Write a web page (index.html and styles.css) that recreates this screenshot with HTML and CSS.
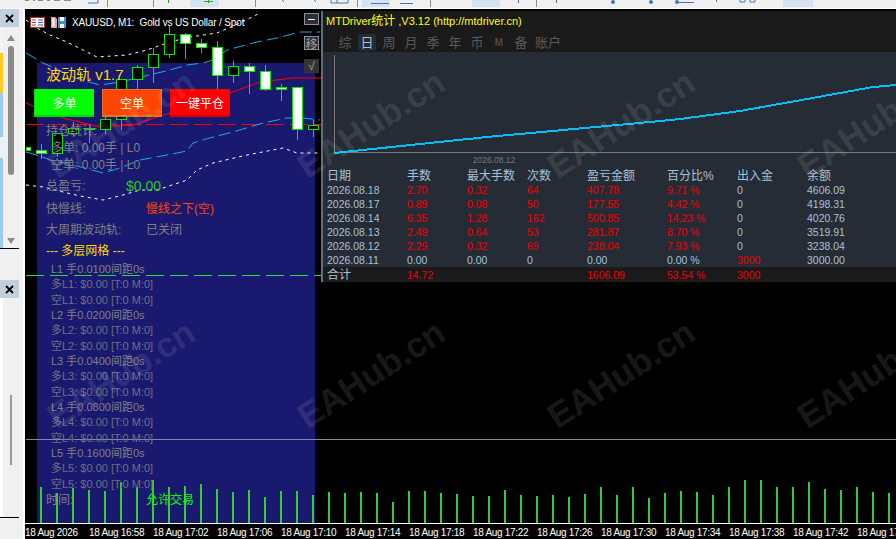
FILE: index.html
```html
<!DOCTYPE html>
<html lang="zh-CN">
<head>
    <meta charset="UTF-8">
    <title>XAUUSD, M1</title>
    <link rel="stylesheet" href="styles.css">
</head>
<body>
    <!-- toolbar, only its bottom edge is in view -->
    <header class="toolbar">
        <svg width="896" height="8" viewBox="0 0 896 8">
            <path d="M190 0h29v7h-29zM362 0h28v7h-28zM472 0h28v7h-28zM783 0h30v7h-30z" fill="#d5e3f1"/>
            <path d="M153.500 0v7M255.500 0v7M357.500 0v7M536.500 0v7M107.500 0v7M430.500 0v7" stroke="#8f8f8f"/>
            <path d="M168.500 0v3M208.500 0v3M204 1.500h9" stroke="#2aa82a"/>
            <path d="M88 3h10V0M282 0l2 2M314 0l2 2M331 0v3h17V0M337 0v3M371 3.500h18M400 3.500h13M518.500 0v3M556.500 0v3M716.500 0v2M677 2.500h17M740 0v2h5V0M750 0v2h5V0" stroke="#3f78b5" fill="none"/>
            <circle cx="613" cy="2" r="2" fill="#3f78b5"/>
            <circle cx="651" cy="2" r="2" fill="#3f78b5"/>
            <circle cx="677" cy="2" r="2" fill="#3f78b5"/>
            <path d="M25 0h4M33 0h2M38 0h5M47 0h3M54 0h6M64 0h7" stroke="#222"/>
        </svg>
    </header>

    <div class="workspace">
        <aside class="dock">
            <section class="dock-top">
                <div class="dock-close">
                    <svg width="9" height="9" viewBox="0 0 9 9"><path d="M1 1l7 7M8 1l-7 7" stroke="#000" stroke-width="1.800"/></svg>
                </div>
                <div class="dock-body">
                    <div class="strip"></div>
                    <div class="scroller">
                        <span class="arrow-up"></span>
                        <span class="thumb"></span>
                        <span class="arrow-down"></span>
                    </div>
                </div>
            </section>
            <section class="dock-bottom">
                <div class="dock-close">
                    <svg width="9" height="9" viewBox="0 0 9 9"><path d="M1 1l7 7M8 1l-7 7" stroke="#000" stroke-width="1.800"/></svg>
                </div>
                <div class="dock-body-low">
                    <span class="thumb-low"></span>
                </div>
            </section>
        </aside>

        <main class="chart">
            <div class="ea-bg"></div>

            <!-- price lines, candles, volume. coordinates are page pixels -->
            <svg class="plot" width="871" height="530" viewBox="25 9 871 530">
                <path class="l-dash" stroke="#ff0000" d="M26 124.500H321"/>
                <path class="l-dash" stroke="#22dd44" d="M26 275.500H321"/>
                <path class="l-sep" d="M26 439.500H896"/>
                <polyline class="l-band" points="26,53 43,63 50,66 75,78 100,85 120,82 170,70 187,65 203,63 213,60 227,50 257,42 277,38 300,32 320,32"/>
                <polyline class="l-band" points="26,152 43,157 50,160 77,166 103,173 120,168 140,160 167,155 187,151 193,143 213,137 233,132 263,123 287,118 303,118 320,120"/>
                <polyline class="l-dots" points="26,20 37,28 50,35 67,42 97,57 127,55 147,50 170,42 190,37 217,33 240,23 260,13"/>
                <polyline class="l-dots" points="26,185 43,187 63,192 80,196 103,200 123,195 140,190 157,190 187,180 197,170 213,163 247,155 283,148 297,153 320,153"/>
                <polyline class="l-ma" points="26,103 35,107 63,118 100,127 133,125 170,113 230,93 260,82 293,78 321,78"/>

                <g class="wicks">
                    <path d="M41.500 144V159M57.500 133V157M73.500 122V137M89.500 125V143M105.500 117V134M121.500 79V130M137.500 65V89M153.500 48V83M169.500 25V58M185.500 33V59M201.500 39V53M217.500 41V89M233.500 61V83M249.500 63V94M265.500 65V91M281.500 84V101M297.500 87V140M313.500 120V137"/>
                </g>
                <g class="bodies">
                    <rect class="up" x="26.500" y="147.500" width="4" height="3"/>
                    <rect class="up" x="36.500" y="150.500" width="10" height="3"/>
                    <rect x="52.500" y="133.500" width="10" height="20"/>
                    <rect x="68.500" y="128.500" width="10" height="5"/>
                    <rect class="up" x="84.500" y="128.500" width="10" height="1"/>
                    <rect x="100.500" y="119.500" width="10" height="10"/>
                    <rect x="116.500" y="79.500" width="10" height="40"/>
                    <rect x="132.500" y="67.500" width="10" height="12"/>
                    <rect x="148.500" y="54.500" width="10" height="13"/>
                    <rect x="164.500" y="34.500" width="10" height="20"/>
                    <rect class="up" x="180.500" y="34.500" width="10" height="9"/>
                    <rect class="up" x="196.500" y="43.500" width="10" height="4"/>
                    <rect class="up" x="212.500" y="47.500" width="10" height="28"/>
                    <rect x="228.500" y="66.500" width="10" height="9"/>
                    <rect class="up" x="244.500" y="66.500" width="10" height="5"/>
                    <rect class="up" x="260.500" y="71.500" width="10" height="18"/>
                    <rect class="up" x="276.500" y="87.500" width="10" height="2"/>
                    <rect class="up" x="292.500" y="87.500" width="10" height="42"/>
                    <rect x="308.500" y="125.500" width="10" height="4"/>
                </g>

                <path class="volume" d="M41 523V487M57 523V493M73 523V488M89 523V490M105 523V491M121 523V482M137 523V487M153 523V480M169 523V487M185 523V486M201 523V484M217 523V489M233 523V492M249 523V490M265 523V497M281 523V491M297 523V491M313 523V495M329 523V492M345 523V493M361 523V492M377 523V493M393 523V502M409 523V491M425 523V491M441 523V493M457 523V494M473 523V496M489 523V496M505 523V490M521 523V495M537 523V496M553 523V495M569 523V497M585 523V494M601 523V487M617 523V495M633 523V487M649 523V498M665 523V493M681 523V491M697 523V492M713 523V495M729 523V487M745 523V480M761 523V480M777 523V487M793 523V487M809 523V482M825 523V489M841 523V490M857 523V487M873 523V492M889 523V493"/>
                <path class="ticks" d="M25.500 523V528M89.500 523V528M153.500 523V528M217.500 523V528M281.500 523V528M345.500 523V528M409.500 523V528M473.500 523V528M537.500 523V528M601.500 523V528M665.500 523V528M729.500 523V528M793.500 523V528M857.500 523V528"/>
            </svg>

            <div class="chart-title">
                <svg width="15" height="11" viewBox="0 0 15 11">
                    <rect x="0.500" y="0.500" width="14" height="10" fill="#fff" stroke="#b22c2c"/>
                    <path d="M2 3h4M2 5.500h4M2 8h4" stroke="#c83232" stroke-width="1.200"/>
                    <path d="M8 3h5M8 5.500h5M8 8h5" stroke="#1f5fa8" stroke-width="1.200"/>
                </svg>
                <svg width="15" height="11" viewBox="0 0 15 11">
                    <path d="M0 0h4l2 2v9H0z" fill="#e8a0a0"/>
                    <path d="M1.500 1.500h2v8h-2z" fill="#fff"/>
                    <path d="M7 0h8v11H7z" fill="#3d8fd0"/>
                    <path d="M9 0h4v4H9zM9 7h4v4H9z" fill="#fff"/>
                </svg>
                <span class="chart-name">XAUUSD, M1:&nbsp; Gold vs US Dollar / Spot</span>
            </div>

            <div class="ea-panel">
                <div class="ea-name">波动轨 v1.7</div>
                <div class="ea-btns">
                    <button class="ea-btn buy">多单</button>
                    <button class="ea-btn sell">空单</button>
                    <button class="ea-btn flat">一键平仓</button>
                </div>
                <div class="stats">
                    <div class="row">持仓统计:</div>
                    <div class="row indent">多单: 0.00手 | L0</div>
                    <div class="row indent">空单: 0.00手 | L0</div>
                </div>
                <div class="row profit"><span class="lbl-short">总盈亏:</span><span class="green">$0.00</span></div>
                <div class="row trend"><span class="lbl">快慢线:</span><span class="orange">慢线之下(空)</span></div>
                <div class="row cycle"><span class="lbl">大周期波动轨:</span><span>已关闭</span></div>
                <div class="row grid-head">--- 多层网格 ---</div>
                <div class="levels">
                    <div class="lv">L1 手0.0100间距0s</div>
                    <div class="lv dim">多L1: $0.00 [T:0 M:0]</div>
                    <div class="lv dim">空L1: $0.00 [T:0 M:0]</div>
                    <div class="lv">L2 手0.0200间距0s</div>
                    <div class="lv dim">多L2: $0.00 [T:0 M:0]</div>
                    <div class="lv dim">空L2: $0.00 [T:0 M:0]</div>
                    <div class="lv">L3 手0.0400间距0s</div>
                    <div class="lv dim">多L3: $0.00 [T:0 M:0]</div>
                    <div class="lv dim">空L3: $0.00 [T:0 M:0]</div>
                    <div class="lv">L4 手0.0800间距0s</div>
                    <div class="lv dim">多L4: $0.00 [T:0 M:0]</div>
                    <div class="lv dim">空L4: $0.00 [T:0 M:0]</div>
                    <div class="lv">L5 手0.1600间距0s</div>
                    <div class="lv dim">多L5: $0.00 [T:0 M:0]</div>
                    <div class="lv dim">空L5: $0.00 [T:0 M:0]</div>
                </div>
                <div class="row clock"><span class="lbl">时间:</span><span class="lime">允许交易</span></div>
            </div>

            <div class="side-btns">
                <button class="side-btn min"><span class="dash"></span></button>
                <button class="side-btn move">移</button>
                <button class="side-btn ok">√</button>
            </div>

            <section class="stat-win">
                <div class="win-title">MTDriver<span class="cjk">统计</span> ,V3.12 (http://mtdriver.cn)</div>
                <nav class="tabs">
                    <span class="tab">综</span>
                    <span class="tab active">日</span>
                    <span class="tab">周</span>
                    <span class="tab">月</span>
                    <span class="tab">季</span>
                    <span class="tab">年</span>
                    <span class="tab">币</span>
                    <span class="tab tab-m">M</span>
                    <span class="tab">备</span>
                    <span class="tab wide">账户</span>
                </nav>
                <svg class="curve" width="573" height="116" viewBox="323 52 573 116">
                    <path d="M334.500 55V152.500H896" fill="none" stroke="#777"/>
                    <polyline points="334,153 487,137 650,122 680,119 740,111 807,99 873,87 896,85" fill="none" stroke="#00bfff" stroke-width="2" shape-rendering="crispEdges"/>
                    <text x="494" y="163" text-anchor="middle" class="curve-date">2026.08.12</text>
                </svg>
                <table class="stat-table">
                    <thead>
                        <tr><th class="c1">日期</th><th class="c2">手数</th><th class="c3">最大手数</th><th class="c4">次数</th><th class="c5">盈亏金额</th><th class="c6">百分比%</th><th class="c7">出入金</th><th>余额</th></tr>
                    </thead>
                    <tbody>
                        <tr><td>2026.08.18</td><td class="red">2.70</td><td class="red">0.32</td><td class="red">64</td><td class="red">407.78</td><td class="red">9.71 %</td><td>0</td><td>4606.09</td></tr>
                        <tr><td>2026.08.17</td><td class="red">0.89</td><td class="red">0.08</td><td class="red">50</td><td class="red">177.55</td><td class="red">4.42 %</td><td>0</td><td>4198.31</td></tr>
                        <tr><td>2026.08.14</td><td class="red">6.35</td><td class="red">1.28</td><td class="red">162</td><td class="red">500.85</td><td class="red">14.23 %</td><td>0</td><td>4020.76</td></tr>
                        <tr><td>2026.08.13</td><td class="red">2.49</td><td class="red">0.64</td><td class="red">53</td><td class="red">281.87</td><td class="red">8.70 %</td><td>0</td><td>3519.91</td></tr>
                        <tr><td>2026.08.12</td><td class="red">2.29</td><td class="red">0.32</td><td class="red">69</td><td class="red">238.04</td><td class="red">7.93 %</td><td>0</td><td>3238.04</td></tr>
                        <tr><td>2026.08.11</td><td>0.00</td><td>0.00</td><td>0</td><td>0.00</td><td>0.00 %</td><td class="red">3000</td><td>3000.00</td></tr>
                    </tbody>
                    <tfoot>
                        <tr><td class="sum">合计</td><td class="red">14.72</td><td></td><td></td><td class="red">1606.09</td><td class="red">53.54 %</td><td class="red">3000</td><td></td></tr>
                    </tfoot>
                </table>
            </section>

            <!-- watermark sits on top of everything -->
            <div class="marks">
                <span class="mark">EAHub.cn</span><span class="mark">EAHub.cn</span><span class="mark">EAHub.cn</span><span class="mark">EAHub.cn</span>
                <span class="mark">EAHub.cn</span><span class="mark">EAHub.cn</span><span class="mark">EAHub.cn</span><span class="mark">EAHub.cn</span>
            </div>

            <footer class="axis">
                <span>18 Aug 2026</span>
                <span>18 Aug 16:58</span>
                <span>18 Aug 17:02</span>
                <span>18 Aug 17:06</span>
                <span>18 Aug 17:10</span>
                <span>18 Aug 17:14</span>
                <span>18 Aug 17:18</span>
                <span>18 Aug 17:22</span>
                <span>18 Aug 17:26</span>
                <span>18 Aug 17:30</span>
                <span>18 Aug 17:34</span>
                <span>18 Aug 17:38</span>
                <span>18 Aug 17:42</span>
                <span>18 Aug 17:46</span>
            </footer>
        </main>
    </div>
</body>
</html>
```

FILE: styles.css
```css
/* Global */
* {
    box-sizing: border-box;
}

html, body {
    margin: 0;
    padding: 0;
}

body {
    width: 896px;
    height: 539px;
    overflow: hidden;
    background-color: #f0f0f0;
    font-family: "Liberation Sans", "Noto Sans CJK SC", sans-serif;
    color: #808080;
}

svg {
    display: block;
}

button {
    font-family: inherit;
    border: none;
    padding: 0;
}

/* Toolbar */
.toolbar {
    height: 9px;
    border-bottom: 1px solid #fff;
    overflow: hidden;
}

.workspace {
    display: flex;
    height: 530px;
}

/* Left dock */
.dock {
    width: 19px;
    flex: none;
    margin-right: 4px;
}

.dock-top {
    height: 240px;
    border-bottom: 1px solid #000;
}

.dock-bottom {
    height: 238px;
    margin-top: 31px;
    border-bottom: 1px solid #000;
}

.dock-close {
    height: 18px;
    display: flex;
    align-items: center;
    justify-content: center;
    background-color: #c2d0de;
}

.dock-body {
    display: flex;
    height: 221px;
}

.strip {
    width: 3px;
    background: linear-gradient(#f4f4f4 0 26px, #ffcc22 26px 66px, #99ccee 66px 110px, #e8f0f8 110px 131px, #99ccee 131px);
}

.scroller {
    flex: 1;
    display: flex;
    flex-direction: column;
    align-items: center;
}

.arrow-up {
    margin-top: 8px;
    border-left: 4px solid transparent;
    border-right: 4px solid transparent;
    border-bottom: 6px solid #8a8a8a;
}

.thumb {
    width: 6px;
    height: 129px;
    margin-top: 5px;
    border-radius: 3px;
    background-color: #8a8a8a;
}

.arrow-down {
    margin-top: 63px;
    border-left: 4px solid transparent;
    border-right: 4px solid transparent;
    border-top: 6px solid #8a8a8a;
}

.dock-body-low {
    height: 219px;
    border-left: 3px solid #fff;
    padding: 97px 0 0 7px;
}

.thumb-low {
    display: block;
    width: 2px;
    height: 70px;
    background-color: #999;
}

/* Chart window */
.chart {
    position: relative;
    flex: 1;
    display: flex;
    flex-direction: column;
    justify-content: flex-end;
    overflow: hidden;
    background-color: #000;
    border-left: 2px solid #fff;
}

.ea-bg {
    position: absolute;
    left: 12px;
    top: 54px;
    width: 278px;
    height: 460px;
    background-color: #191970;
}

.plot {
    position: absolute;
    left: 0;
    top: 0;
}

.l-dash {
    fill: none;
    stroke-dasharray: 18 6;
    shape-rendering: crispEdges;
}

.l-sep {
    stroke: #7f8b9f;
    shape-rendering: crispEdges;
}

.l-band {
    fill: none;
    stroke: #1ea8e8;
    stroke-dasharray: 12 5;
}

.l-dots {
    fill: none;
    stroke: #fff;
    stroke-dasharray: 3 4;
}

.l-ma {
    fill: none;
    stroke: #ff0000;
}

.wicks path {
    stroke: #00e800;
    shape-rendering: crispEdges;
}

.bodies rect {
    fill: #000;
    stroke: #00e800;
    shape-rendering: crispEdges;
}

.bodies rect.up {
    fill: #fff;
}

.volume {
    stroke: #32cd32;
    stroke-width: 2;
    shape-rendering: crispEdges;
}

.ticks {
    stroke: #fff;
    shape-rendering: crispEdges;
}

.chart-title {
    position: absolute;
    left: 5px;
    top: 8px;
    display: flex;
    align-items: center;
    gap: 6px;
}

.chart-name {
    font-size: 10px;
    line-height: 11px;
    letter-spacing: -0.15px;
    color: #fff;
}

/* EA info panel */
.ea-panel {
    position: absolute;
    left: 12px;
    top: 54px;
    width: 278px;
    padding-left: 9px;
    font-size: 12px;
}

.ea-name {
    height: 24px;
    line-height: 24px;
    font-size: 15px;
    color: #ffd700;
}

.ea-btns {
    display: flex;
    gap: 8px;
    height: 28px;
    margin: 2px 0 0 -12px;
}

.ea-btn {
    width: 60px;
    height: 28px;
    font-size: 12px;
    color: #fff;
}

.buy {
    background-color: #00ff00;
    border-bottom: 2px solid #00d800;
    border-left: 1px solid #00d800;
}

.sell {
    background-color: #ff4500;
    border: 1px solid #e8701f;
    border-bottom-width: 2px;
}

.flat {
    background-color: #ff0000;
    border-bottom: 2px solid #d80000;
}

.stats {
    margin-top: 6px;
}

.row {
    display: flex;
    height: 17px;
    line-height: 17px;
    white-space: pre;
}

.indent {
    padding-left: 5px;
}

.lbl {
    width: 100px;
}

.lbl-short {
    width: 80px;
}

.profit {
    height: 24px;
    line-height: 24px;
}

.trend {
    height: 22px;
    line-height: 22px;
}

.cycle {
    height: 21px;
    line-height: 21px;
}

.grid-head {
    height: 21px;
    line-height: 21px;
    color: #ffd700;
}

.green {
    font-size: 14px;
    color: #22cc22;
}

.orange {
    color: #ff4500;
}

.lime {
    color: #00ff00;
}

.levels {
    padding-left: 5px;
}

.lv {
    height: 15.33px;
    line-height: 15.33px;
    font-size: 11px;
    white-space: pre;
}

.lv.dim {
    color: #6f6f82;
}

.clock {
    height: 16px;
    line-height: 16px;
}

/* Small buttons on the right of the chart */
.side-btns {
    position: absolute;
    left: 279px;
    top: 4px;
    display: flex;
    flex-direction: column;
}

.side-btn {
    display: flex;
    align-items: center;
    justify-content: center;
    width: 15px;
    height: 14px;
    border: 1px solid #8a8f98;
    background-color: #2b2f36;
    font-size: 12px;
    color: #a0a0a0;
}

.side-btn.min {
    height: 12px;
}

.side-btn.move {
    margin-top: 11px;
}

.side-btn.ok {
    margin-top: 9px;
    border-color: #333;
    background-color: #333;
}

.dash {
    width: 7px;
    height: 1px;
    background-color: #fff;
}

/* Statistics window */
.stat-win {
    position: absolute;
    left: 296px;
    top: 2px;
    right: 0;
    height: 271px;
    background-color: #252c35;
    border-left: 2px solid #5e6e7e;
    border-bottom: 1px solid #7d8ba3;
}

.win-title {
    height: 19px;
    line-height: 20px;
    padding-left: 3px;
    background-color: #1a1a1a;
    font-size: 11px;
    color: #ffff00;
}

.cjk {
    font-size: 12px;
}

.tabs {
    display: flex;
    gap: 4px;
    height: 22px;
    padding: 4px 0 0 13px;
    background-color: #1a1a1a;
}

.tab {
    width: 18px;
    height: 17px;
    line-height: 17px;
    text-align: center;
    font-size: 13px;
    color: #5a5a5a;
}

.tab.active {
    background-color: #252c35;
    border-radius: 2px;
    color: #a8c0d8;
}

.tab-m {
    font-size: 10px;
    font-weight: bold;
    color: #54493f;
}

.tab.wide {
    width: 28px;
}

.curve-date {
    font-size: 8.500px;
    fill: #6f7885;
}

.stat-table {
    table-layout: fixed;
    width: 573px;
    border-collapse: collapse;
    color: #a8c0d8;
    font-size: 10.500px;
}

.stat-table th,
.stat-table td {
    padding: 0;
    text-align: left;
    font-weight: normal;
    white-space: nowrap;
}

.stat-table th {
    height: 15px;
    padding-top: 2px;
    line-height: 13px;
    font-size: 12px;
}

.stat-table th:first-child,
.stat-table td:first-child {
    padding-left: 4px;
}

.stat-table td {
    height: 14px;
    line-height: 14px;
}

.stat-table tfoot td {
    height: 15px;
    padding-top: 2px;
    line-height: 13px;
    background-color: #1a1a1a;
}

.stat-table .sum {
    font-size: 12px;
}

.c1 { width: 84px; }
.c2 { width: 60px; }
.c3 { width: 60px; }
.c4 { width: 60px; }
.c5 { width: 80px; }
.c6 { width: 70px; }
.c7 { width: 70px; }

.red {
    color: #f00000;
}

/* Watermark */
.marks {
    position: absolute;
    left: 38px;
    top: 135px;
    display: grid;
    grid-template-columns: repeat(4, 250px);
    grid-auto-rows: 250px;
    pointer-events: none;
}

.mark {
    display: block;
    width: max-content;
    height: 44px;
    line-height: 44px;
    font-size: 35px;
    font-weight: bold;
    color: rgba(255, 255, 255, 0.11);
    transform: rotate(-33deg);
    transform-origin: 0 100%;
}

/* Time axis */
.axis {
    position: relative;
    display: flex;
    height: 16px;
    border-top: 1px solid #fff;
    background-color: #000;
    font-size: 10px;
    line-height: 17px;
    letter-spacing: -0.3px;
    color: #fff;
    white-space: nowrap;
}

.axis span {
    flex: none;
    width: 64px;
}
```
